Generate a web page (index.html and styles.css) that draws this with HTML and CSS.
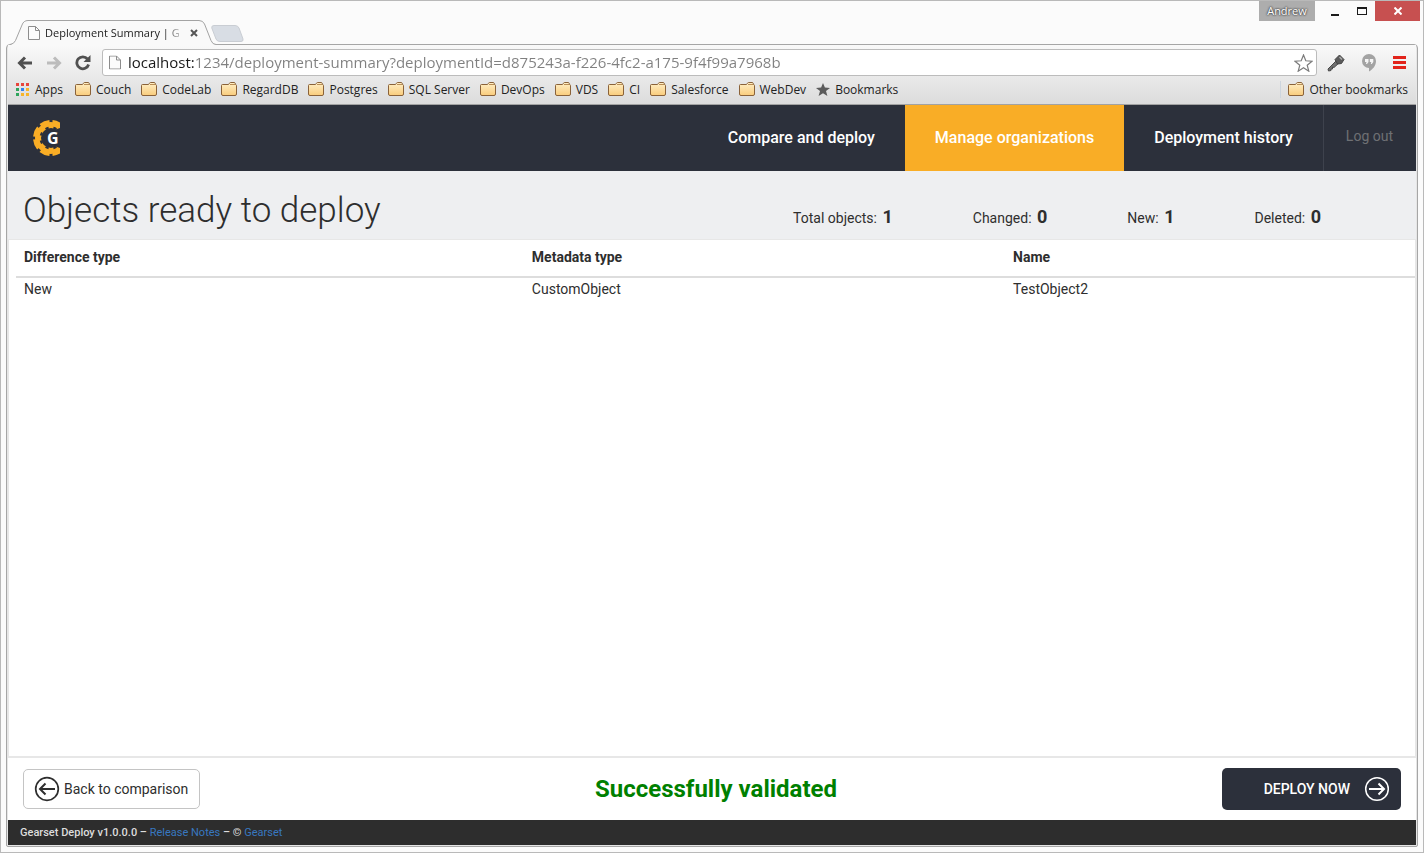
FILE: index.html
```html
<!DOCTYPE html>
<html lang="en">
<head>
<meta charset="utf-8">
<title>Deployment Summary | Gearset</title>
<link rel="stylesheet" href="styles.css">
</head>
<body>
<svg class="defs" aria-hidden="true">
  <defs>
    <linearGradient id="folder-fill" x1="0" y1="0" x2="0" y2="1">
      <stop offset="0" stop-color="#fff0c8"/>
      <stop offset="1" stop-color="#f9cc7c"/>
    </linearGradient>
    <symbol id="folder" viewBox="0 0 16 14">
      <path d="M.5 12V3.5q0-1 1-1h6L8.500 1.200q.3-.7 1-.7h3.500q1 0 1.200.7l.3 1.300q1 .2 1 1V12q0 1.500-1.500 1.500H2Q.5 13.500.5 12Z" fill="url(#folder-fill)" stroke="#8a6239"/>
      <path d="M9 2.500h5" stroke="#b98d55" fill="none"/>
    </symbol>
    <symbol id="page" viewBox="0 0 12 14">
      <path d="M.5.5h7l4 4v9H.5Z" fill="#fbfbfb" stroke="#8d8d8d"/>
      <path d="M7.500.5v4h4" fill="none" stroke="#8d8d8d"/>
    </symbol>
  </defs>
</svg>

<header class="titlebar">
  <div class="tabs">
    <div class="tab">
      <svg class="tab-shape" width="206" height="25" viewBox="0 0 206 25" aria-hidden="true">
        <path d="M0 25Q4 24 5.500 20.500L12 5Q13.500.5 18 .5H189Q193 .5 194.500 4L201 20.500Q202.500 24.500 206 24.500V25Z" fill="#f9f9f9"/>
        <path d="M0 24.500Q4 24 5.500 20.500L12 5Q13.500.5 18 .5H189Q193 .5 194.500 4L201 20.500Q202.500 24.500 206 24.500" fill="none" stroke="#a3a3a3"/>
      </svg>
      <svg class="tab-icon" width="12" height="14" aria-hidden="true"><use href="#page"/></svg>
      <span class="tab-title">Deployment Summary | G</span>
      <button class="tab-close" aria-label="Close tab">
        <svg width="8" height="8" viewBox="0 0 8 8"><path d="M1 1l6 6M7 1L1 7" stroke="#555" stroke-width="2"/></svg>
      </button>
    </div>
    <button class="new-tab" aria-label="New tab">
      <svg width="33" height="17" viewBox="0 0 33 17"><path d="M3 .5H24Q27 .5 28 3L32 14Q32.500 16.500 30 16.500H9Q6 16.500 5 14L.8 3Q.3.5 3 .5Z" fill="#d8dde4" stroke="#c9cdd3"/></svg>
    </button>
  </div>
  <div class="window-controls">
    <button class="user">Andrew</button>
    <button class="win-button minimize" aria-label="Minimize"><svg width="8" height="10" viewBox="0 0 8 10"><path d="M0 9h8" stroke="#1b1b1b" stroke-width="2"/></svg></button>
    <button class="win-button maximize" aria-label="Maximize"><svg width="10" height="8" viewBox="0 0 10 8"><path d="M.5 0v8M9.500 0v8M0 7.500h10" stroke="#1b1b1b"/><path d="M0 1h10" stroke="#1b1b1b" stroke-width="2"/></svg></button>
    <button class="win-button close" aria-label="Close"><svg width="8" height="8" viewBox="0 0 8 8"><path d="M.5.5l7 7M7.500.5l-7 7" stroke="#fff" stroke-width="2"/></svg></button>
  </div>
</header>

<div class="frame">
  <div class="chrome">
    <div class="toolbar">
      <button class="tool" aria-label="Back"><svg width="16" height="14" viewBox="0 0 16 14"><path d="M15 7H3M8 1.500L2.500 7 8 12.500" fill="none" stroke="#505050" stroke-width="3"/></svg></button>
      <button class="tool" aria-label="Forward"><svg width="16" height="14" viewBox="0 0 16 14"><path d="M1 7h12M8 1.500L13.500 7 8 12.500" fill="none" stroke="#bcbcbc" stroke-width="3"/></svg></button>
      <button class="tool" aria-label="Reload"><svg width="16" height="16" viewBox="0 0 16 16"><path d="M12.500 4A6 6 0 1 0 13.600 9.500" fill="none" stroke="#505050" stroke-width="2.800"/><path d="M15.500 0v7H8.500Z" fill="#505050"/></svg></button>
      <div class="omnibox">
        <svg width="12" height="15" viewBox="0 0 12 14" aria-hidden="true"><use href="#page"/></svg>
        <input class="address" type="text" aria-label="Address" value="localhost:1234/deployment-summary?deploymentId=d875243a-f226-4fc2-a175-9f4f99a7968b">
        <button class="star" aria-label="Bookmark this page"><svg width="19" height="18" viewBox="0 0 19 18"><path d="M9.500 1l2.300 5.800 6.200.4-4.800 4 1.600 6-5.300-3.400-5.300 3.400 1.600-6L1 7.200l6.200-.4Z" fill="#fff" stroke="#7b7b7b" stroke-width="1.200"/></svg></button>
      </div>
      <div class="extensions">
        <button class="tool" aria-label="Key extension"><svg width="18" height="18" viewBox="0 0 18 18"><path d="M1 15L10 6l2.500 2.500L7 13.500 5.500 13v2L4 15v1.500L1.500 17Z" fill="#707070" stroke="#484848"/><path d="M8 5.500L12.500 1l4.500 4.500-2.500 4-4 .5Z" fill="#5a5a5a" stroke="#444"/><path d="M12.500 3l2.500 2.500" stroke="#aaa" stroke-width="1.500"/></svg></button>
        <button class="tool" aria-label="Hangouts"><svg width="14" height="18" viewBox="0 0 14 18"><path d="M7 0a7 7 0 0 1 7 7c0 5-3.500 8.500-7 10.500V14A7 7 0 0 1 7 0Z" fill="#a3a3a3"/><path d="M3 5h3.500v3L5 10H4l.5-2H3ZM7.800 5h3.500v3L9.800 10h-1l.5-2H7.800Z" fill="#f5f5f5"/></svg></button>
        <button class="tool" aria-label="Menu"><svg width="13" height="13" viewBox="0 0 13 13"><path d="M0 1.500h13M0 6.500h13M0 11.500h13" stroke="#e2231a" stroke-width="3"/></svg></button>
      </div>
    </div>
    <nav class="bookmarks" aria-label="Bookmarks">
      <a class="bookmark apps" href="#"><svg width="14" height="13" viewBox="0 0 14 13" aria-hidden="true"><path d="M0 0h3v3H0zM5 0h3v3H5zM10 0h3v3h-3z" fill="#e8453c"/><path d="M0 5h3v3H0z" fill="#2fa45c"/><path d="M5 5h3v3H5z" fill="#3183f0"/><path d="M10 5h3v3h-3zM5 10h3v3H5zM10 10h3v3h-3z" fill="#f7b529"/><path d="M0 10h3v3H0z" fill="#2fa45c"/></svg>Apps</a>
      <a class="bookmark" href="#"><svg width="16" height="14" aria-hidden="true"><use href="#folder"/></svg>Couch</a>
      <a class="bookmark" href="#"><svg width="16" height="14" aria-hidden="true"><use href="#folder"/></svg>CodeLab</a>
      <a class="bookmark" href="#"><svg width="16" height="14" aria-hidden="true"><use href="#folder"/></svg>RegardDB</a>
      <a class="bookmark" href="#"><svg width="16" height="14" aria-hidden="true"><use href="#folder"/></svg>Postgres</a>
      <a class="bookmark" href="#"><svg width="16" height="14" aria-hidden="true"><use href="#folder"/></svg>SQL Server</a>
      <a class="bookmark" href="#"><svg width="16" height="14" aria-hidden="true"><use href="#folder"/></svg>DevOps</a>
      <a class="bookmark" href="#"><svg width="16" height="14" aria-hidden="true"><use href="#folder"/></svg>VDS</a>
      <a class="bookmark" href="#"><svg width="16" height="14" aria-hidden="true"><use href="#folder"/></svg>CI</a>
      <a class="bookmark" href="#"><svg width="16" height="14" aria-hidden="true"><use href="#folder"/></svg>Salesforce</a>
      <a class="bookmark" href="#"><svg width="16" height="14" aria-hidden="true"><use href="#folder"/></svg>WebDev</a>
      <a class="bookmark" href="#"><svg width="14" height="13" viewBox="0 0 14 13" aria-hidden="true"><path d="M7 0l1.900 4.600 5.100.3-4 3.200 1.400 4.900L7 10.200 2.600 13 4 8.100 0 4.900l5.100-.3Z" fill="#5b5b5b"/></svg>Bookmarks</a>
      <a class="bookmark other" href="#"><svg width="16" height="14" aria-hidden="true"><use href="#folder"/></svg>Other bookmarks</a>
    </nav>
  </div>

  <div class="app">
    <header class="app-header">
      <a class="logo" href="#" aria-label="Gearset">
        <svg width="28" height="38" viewBox="0 0 28 38">
          <g fill="none" stroke="#f9ad26">
            <circle cx="19" cy="19" r="13" stroke-width="6"/>
            <circle cx="19" cy="19" r="16.500" stroke-width="3" pathLength="80" stroke-dasharray="7.600 2.400" stroke-dashoffset="-1.200"/>
          </g>
          <circle cx="19" cy="19" r="10.500" fill="none" stroke="#2c303b" stroke-width="2" pathLength="80" stroke-dasharray="4 6" stroke-dashoffset="-3"/>
          <path d="M19 12L28 9V29L19 26Z" fill="#2c303b"/>
          <text class="logo-letter" x="15" y="25">G</text>
        </svg>
      </a>
      <nav class="menu" aria-label="Main">
        <a class="menu-item" href="#">Compare and deploy</a>
        <a class="menu-item active" href="#">Manage organizations</a>
        <a class="menu-item" href="#">Deployment history</a>
        <a class="logout" href="#">Log out</a>
      </nav>
    </header>

    <section class="summary">
      <h1 class="page-title">Objects ready to deploy</h1>
      <div class="stats">
        <span class="stat">Total objects: <b class="count">1</b></span>
        <span class="stat">Changed: <b class="count">0</b></span>
        <span class="stat">New: <b class="count">1</b></span>
        <span class="stat">Deleted: <b class="count">0</b></span>
      </div>
    </section>

    <main class="panel">
      <table class="objects">
        <thead>
          <tr><th class="col-diff">Difference type</th><th class="col-meta">Metadata type</th><th>Name</th></tr>
        </thead>
        <tbody>
          <tr><td>New</td><td>CustomObject</td><td>TestObject2</td></tr>
        </tbody>
      </table>
    </main>

    <div class="actions">
      <div class="side"><button class="button back">
        <svg width="26" height="26" viewBox="0 0 26 26" aria-hidden="true"><circle cx="13" cy="13" r="11.300" fill="none" stroke="#2e2e2e" stroke-width="1.700"/><path d="M21 13H6M11.500 7.500L6 13l5.500 5.500" fill="none" stroke="#2e2e2e" stroke-width="2"/></svg>
        Back to comparison</button></div>
      <strong class="status">Successfully validated</strong>
      <div class="side end"><button class="button deploy">DEPLOY NOW
        <svg width="26" height="26" viewBox="0 0 26 26" aria-hidden="true"><circle cx="13" cy="13" r="11.300" fill="none" stroke="#fff" stroke-width="1.500"/><path d="M5 13h15M14.500 7.500L20 13l-5.500 5.500" fill="none" stroke="#fff" stroke-width="2"/></svg>
      </button></div>
    </div>

    <footer class="footer">Gearset Deploy v1.0.0.0 – <a class="footer-link" href="#">Release Notes</a> – © <a class="footer-link" href="#">Gearset</a></footer>
  </div>
</div>
</body>
</html>
```
FILE: styles.css
```css
* {
  box-sizing: border-box;
}

body {
  margin: 0;
  min-height: 100vh;
  display: flex;
  flex-direction: column;
  border: 1px solid #b9b9b9;
  background: #fbfbfb;
  font-family: "Open Sans", sans-serif;
  font-size: 12px;
  color: #222;
}

button {
  margin: 0;
  padding: 0;
  border: 0;
  background: none;
  font: inherit;
  color: inherit;
}

svg {
  display: block;
  flex: none;
}

a {
  color: inherit;
  text-decoration: none;
}

.defs {
  position: absolute;
  width: 0;
  height: 0;
}

/* Title bar */
.titlebar {
  display: flex;
  justify-content: space-between;
  align-items: flex-start;
  padding: 0 3px 0 9px;
}

.tabs {
  display: flex;
  padding-top: 19px;
}

.tab {
  position: relative;
  z-index: 1;
  display: flex;
  align-items: center;
  width: 206px;
  height: 25px;
  margin-bottom: -1px;
  padding: 0 0 0 18px;
}

.tab-shape {
  position: absolute;
  inset: 0;
}

.tab-icon,
.tab-title,
.tab-close {
  position: relative;
}

.tab-title {
  width: 145px;
  margin-left: 5px;
  font-size: 11px;
  white-space: nowrap;
  -webkit-mask-image: linear-gradient(to right, #000 120px, transparent 140px);
  mask-image: linear-gradient(to right, #000 120px, transparent 140px);
}

.new-tab {
  align-self: flex-start;
  margin-top: 5px;
  margin-left: -5px;
}

.window-controls {
  display: flex;
  height: 20px;
}

.user {
  width: 56px;
  padding-bottom: 1px;
  background: #adadad;
  color: #fff;
  font-size: 11px;
  text-shadow: 0 0 2px #333, 0 0 2px #333;
}

.win-button {
  display: grid;
  place-items: center;
}

.minimize {
  width: 40px;
}

.maximize {
  width: 14px;
}

.close {
  width: 45px;
  margin-left: 6px;
  background: #c75050;
}

/* Browser frame */
.frame {
  flex: 1;
  display: flex;
  flex-direction: column;
  margin: 0 5px 5px;
  border: 1px solid #a6a6a6;
  border-radius: 4px 4px 2px 2px;
  padding: 0 1px 1px;
  background: #e6e6e6;
}

.chrome {
  border-bottom: 1px solid #a2a2a2;
  background: linear-gradient(#f9f9f9, #dcdcdc);
}

.toolbar {
  display: flex;
  align-items: center;
  gap: 13px;
  padding: 4px 10px 0 9px;
}

.omnibox {
  flex: 1;
  display: flex;
  align-items: center;
  height: 27px;
  margin-left: -2px;
  padding: 0 3px 0 6px;
  border: 1px solid #bcbcbc;
  border-radius: 3px;
  background: #fff;
}

.address {
  flex: 1;
  min-width: 0;
  padding: 0 0 2px;
  margin-left: 7px;
  border: 0;
  outline: 0;
  font: 15px/22px "Open Sans", sans-serif;
  color: transparent;
  background: linear-gradient(to right, #1a1a1a 67px, #808080 67px);
  -webkit-background-clip: text;
  background-clip: text;
}

.extensions {
  display: flex;
  align-items: center;
  gap: 17px;
  margin-left: -3px;
}

.bookmarks {
  display: flex;
  align-items: center;
  gap: 10px;
  height: 28px;
  padding: 0 8px 2px;
}

.bookmark {
  display: flex;
  align-items: center;
  gap: 5px;
  white-space: nowrap;
}

.apps {
  margin-right: 2px;
}

.other {
  margin-left: auto;
  padding-left: 7px;
  border-left: 1px solid #cdd5de;
}

/* Application */
.app {
  flex: 1;
  display: flex;
  flex-direction: column;
  background: #fff;
  font-family: Roboto, sans-serif;
  font-size: 14px;
  line-height: 20px;
  color: #2e2e2e;
}

.app-header {
  display: flex;
  justify-content: space-between;
  height: 66px;
  background: #2c303b;
}

.logo {
  padding: 14px 0 0 24px;
}

.logo-letter {
  font: bold 16px "Open Sans", sans-serif;
  fill: #fff;
}

.menu {
  display: flex;
  color: #fff;
}

.menu-item {
  display: flex;
  align-items: center;
  padding: 0 30px;
  font-size: 16px;
  font-weight: 500;
}

.active {
  background: #f9ad26;
}

.logout {
  display: flex;
  align-items: center;
  padding: 0 23px 4px 22px;
  border-left: 1px solid #3e424d;
  color: #6f7074;
}

.summary {
  display: flex;
  justify-content: space-between;
  align-items: flex-end;
  height: 68px;
  padding: 0 95px 8px 15px;
  background: #eeeff1;
}

.page-title {
  margin: 0;
  font-size: 35px;
  font-weight: 300;
  line-height: 40px;
}

.stats {
  display: flex;
  gap: 80px;
  padding-bottom: 3px;
}

.count {
  margin-left: 2px;
  font-size: 18px;
  font-weight: 700;
}

.panel {
  flex: 1;
  padding-left: 7px;
  border: 1px solid #e7e7e7;
  border-bottom-width: 2px;
}

.objects {
  width: 100%;
  table-layout: fixed;
  border-collapse: collapse;
  text-align: left;
}

.objects th {
  padding: 7px 8px 9px;
  border-bottom: 2px solid #ddd;
  font-weight: 700;
}

.objects td {
  padding: 1px 8px;
}

.col-diff {
  width: 36.3%;
}

.col-meta {
  width: 34.4%;
}

.actions {
  display: flex;
  align-items: center;
  height: 62px;
  padding: 0 15px;
}

.side {
  flex: 1;
  display: flex;
}

.end {
  justify-content: flex-end;
}

.button {
  display: flex;
  align-items: center;
  border-radius: 5px;
  white-space: nowrap;
}

.back {
  gap: 4px;
  height: 40px;
  padding: 0 11px 0 10px;
  border: 1px solid #c4c4c4;
}

.deploy {
  gap: 14px;
  height: 42px;
  padding: 0 11px 0 42px;
  background: #2c303b;
  color: #fff;
  font-weight: 500;
}

.status {
  padding-left: 8px;
  color: #008000;
  font-size: 24px;
  font-weight: 700;
}

.footer {
  padding: 3px 12px 2px;
  background: #2d2d2d;
  color: #ddd;
  font-size: 11px;
  font-weight: 500;
}

.footer-link {
  color: #3878c0;
  font-weight: 400;
}
```
